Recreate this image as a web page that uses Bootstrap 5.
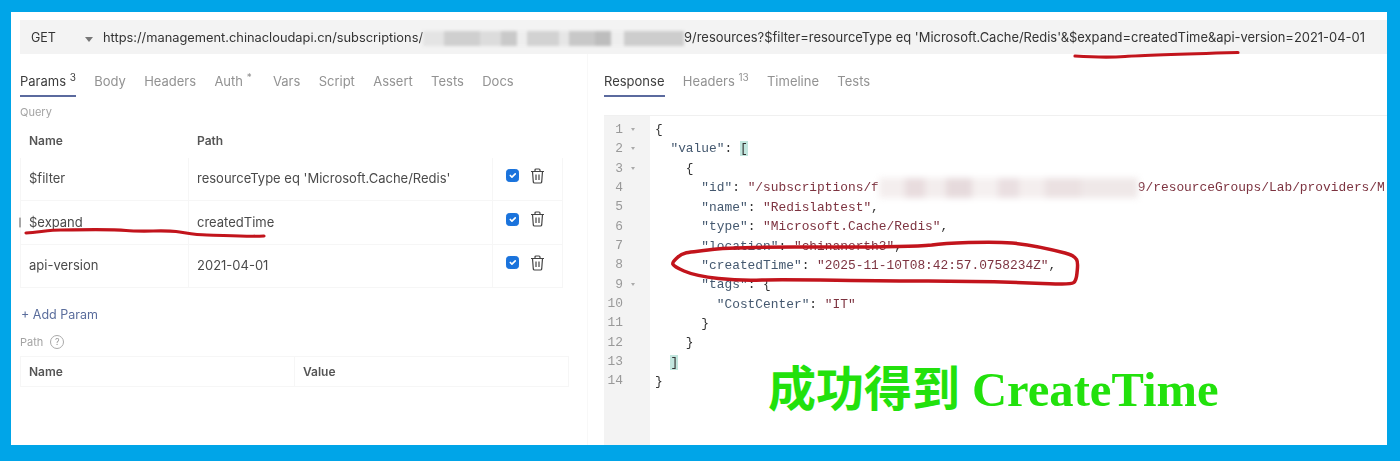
<!DOCTYPE html>
<html lang="en"><head><meta charset="utf-8"><title>API response</title>
<link href="https://cdn.jsdelivr.net/npm/bootstrap@5.3.0/dist/css/bootstrap.min.css" rel="stylesheet">
<style>
html,body{height:461px;overflow:hidden}
body{background:#00a5e8;font-family:Inter,"Liberation Sans",sans-serif;font-size:13px;color:#444;position:relative}
.sheet{margin:12px 13px 0 11px;height:433px;background:#fff;overflow:hidden;filter:blur(.3px)}
.urlbar{margin:8px 0 0 9px;height:34px;background:#f3f3f3;font-size:12.95px;color:#333;white-space:nowrap;padding-top:2px}
.url-head{font-size:12.83px}
.verb{width:59px;padding-left:11px;font-size:12.5px}
.caret-mark{width:0;height:0;border-left:4px solid transparent;border-right:4px solid transparent;border-top:5px solid #777;margin:2px 10px 0 6px}
.smudge{filter:blur(1.5px);height:15px;display:inline-flex;vertical-align:middle}
.smudge i{display:block;height:100%}
.pane-left{width:577px;padding-left:9px;border-right:1px solid #f8f8f8;flex:none}
.pane-right{padding-left:16px;flex:1;min-width:0}
.tabset{gap:18.3px;height:43px;padding-top:12px;font-size:13px;color:#929292;flex-wrap:nowrap}
.tabset .tabitem{height:31px;line-height:30px;white-space:nowrap}
.tabset .on{color:#3c3c3c;border-bottom:2px solid #5b6a9e}
.tabset sup{font-size:10px;top:-.55em}
.authtab{padding-right:3px}
.cap{font-size:11px;color:#a3a3a3}
.query-cap{margin-top:7px}
.grid-tbl{table-layout:fixed;margin:0;--bs-table-border-color:#f6f6f6;--bs-table-color:#4a4a4a}
.grid-tbl th,.grid-tbl td{padding:0 8px;vertical-align:middle;font-size:13px}
.grid-tbl th{font-weight:600;font-size:12px;color:#555}
.params{width:542px;margin-top:4px}
.params thead tr{height:32px;border-color:transparent}
.params thead th{border-color:transparent}
.params tbody tr{height:43.5px}
.params td.row-tools{padding:10px 0 0 13px;vertical-align:top}
.toolset{height:16px;gap:11px}
.tick{width:13px;height:13px;margin:0;border-radius:3px;background-color:#1a73dc!important;border-color:#1a73dc!important;float:none;opacity:1!important;flex:none}
.adder{color:#5a6d9c;font-size:12.5px;margin:18px 0 0 1px;line-height:18px}
.path-cap{margin-top:9px;line-height:18px}
.help-dot{width:14px;height:14px;border:1px solid #aaa;border-radius:50%;font-size:9px;line-height:12px;text-align:center;color:#999;margin-left:7px}
.pathtbl{width:549px;margin-top:5px}
.pathtbl tr{height:30px}
.codebox{border-top:1px solid #f0f0f0;margin-top:18px;height:330px;font-family:"Liberation Mono","DejaVu Sans Mono",monospace;font-size:12.87px;line-height:19.33px;overflow:hidden}
.gutter{width:46px;flex:none;background:#f3f3f3;color:#999;padding-top:4px;height:330px}
.gutter div{display:flex;justify-content:flex-end;align-items:center;padding-right:14px;height:19.33px;position:relative}
.gutter b{display:block;width:11px;padding-left:3px;margin-right:-11px}
.gutter div{padding-right:27px}
.gutter .fold::after{content:"";display:block;border-left:2.5px solid transparent;border-right:2.5px solid transparent;border-top:3.5px solid #aaa;margin-left:5px}
.gutter b{margin-right:-11px}
.codelines{padding:4px 0 0 5px;color:#333;white-space:pre}
.k{color:#44586f}.s{color:#7d3340}
.hl{background:#c2e6de}
.marks{position:absolute;left:0;top:0;pointer-events:none}
.banner{position:absolute;left:768px;top:361px;color:#22e10c;font:700 48px/1.2 "Liberation Serif","Noto Sans CJK SC",serif;white-space:pre}
.banner span{font-size:48.6px}
</style></head>
<body>
<div class="sheet d-flex flex-column">
  <div class="urlbar d-flex align-items-center">
    <span class="verb">GET</span><span class="caret-mark"></span>
    <span><span class="url-head">https://management.chinacloudapi.cn/subscriptions/</span><span class="smudge" style="width:261px"><i style="width:8%;background:#e4e4e4"></i><i style="width:14%;background:#cfcfcf"></i><i style="width:8%;background:#dcdcdc"></i><i style="width:6%;background:#c9c9c9"></i><i style="width:4%;background:#eee"></i><i style="width:12%;background:#d2d2d2"></i><i style="width:4%;background:#e6e6e6"></i><i style="width:10%;background:#c8c8c8"></i><i style="width:6%;background:#bdbdbd"></i><i style="width:5%;background:#eee"></i><i style="width:23%;background:#cdcdcd"></i></span>9/resources?$filter=resourceType eq 'Microsoft.Cache/Redis'&amp;$expand=createdTime&amp;api-version=2021-04-01</span>
  </div>
  <div class="d-flex flex-grow-1">
    <div class="pane-left">
      <div class="nav tabset">
        <span class="tabitem on">Params <sup>3</sup></span><span class="tabitem">Body</span><span class="tabitem">Headers</span><span class="tabitem authtab">Auth <sup>*</sup></span><span class="tabitem">Vars</span><span class="tabitem">Script</span><span class="tabitem">Assert</span><span class="tabitem">Tests</span><span class="tabitem">Docs</span>
      </div>
      <div class="cap query-cap">Query</div>
      <table class="table table-bordered grid-tbl params">
        <colgroup><col style="width:168px"><col style="width:304px"><col style="width:70px"></colgroup>
        <thead><tr><th>Name</th><th>Path</th><th></th></tr></thead>
        <tbody>
          <tr><td>$filter</td><td>resourceType eq 'Microsoft.Cache/Redis'</td><td class="row-tools"><div class="toolset d-flex align-items-center"><input class="form-check-input tick" type="checkbox" checked aria-label="enabled"><svg width="15" height="16" viewBox="0 0 15 16" fill="none" stroke="#444" stroke-width="1.2"><path d="M1 3.5h13M5 3.5V2a1 1 0 0 1 1-1h3a1 1 0 0 1 1 1v1.5M2.5 3.5l.8 10.5a1.3 1.3 0 0 0 1.3 1h5.8a1.3 1.3 0 0 0 1.3-1l.8-10.5M6 6.500v5.500M9 6.500v5.500"/></svg></div></td></tr>
          <tr><td>$expand</td><td>createdTime</td><td class="row-tools"><div class="toolset d-flex align-items-center"><input class="form-check-input tick" type="checkbox" checked aria-label="enabled"><svg width="15" height="16" viewBox="0 0 15 16" fill="none" stroke="#444" stroke-width="1.2"><path d="M1 3.5h13M5 3.5V2a1 1 0 0 1 1-1h3a1 1 0 0 1 1 1v1.5M2.5 3.5l.8 10.5a1.3 1.3 0 0 0 1.3 1h5.8a1.3 1.3 0 0 0 1.3-1l.8-10.5M6 6.500v5.500M9 6.500v5.500"/></svg></div></td></tr>
          <tr><td>api-version</td><td>2021-04-01</td><td class="row-tools"><div class="toolset d-flex align-items-center"><input class="form-check-input tick" type="checkbox" checked aria-label="enabled"><svg width="15" height="16" viewBox="0 0 15 16" fill="none" stroke="#444" stroke-width="1.2"><path d="M1 3.5h13M5 3.5V2a1 1 0 0 1 1-1h3a1 1 0 0 1 1 1v1.5M2.5 3.5l.8 10.5a1.3 1.3 0 0 0 1.3 1h5.8a1.3 1.3 0 0 0 1.3-1l.8-10.5M6 6.500v5.500M9 6.500v5.500"/></svg></div></td></tr>
        </tbody>
      </table>
      <div class="adder">+ Add Param</div>
      <div class="cap path-cap d-flex align-items-center">Path<span class="help-dot">?</span></div>
      <table class="table table-bordered grid-tbl pathtbl">
        <colgroup><col style="width:50%"><col style="width:50%"></colgroup>
        <tr><th>Name</th><th>Value</th></tr>
      </table>
    </div>
    <div class="pane-right">
      <div class="nav tabset">
        <span class="tabitem on">Response</span><span class="tabitem">Headers <sup>13</sup></span><span class="tabitem">Timeline</span><span class="tabitem">Tests</span>
      </div>
      <div class="codebox d-flex">
        <div class="gutter">
          <div>1<b class="fold"></b></div><div>2<b class="fold"></b></div><div>3<b class="fold"></b></div><div>4<b></b></div><div>5<b></b></div><div>6<b></b></div><div>7<b></b></div><div>8<b></b></div><div>9<b class="fold"></b></div><div>10<b></b></div><div>11<b></b></div><div>12<b></b></div><div>13<b></b></div><div>14<b></b></div>
        </div>
        <div class="codelines"><div>{</div><div>  <span class="k">"value"</span>: <span class="hl">[</span></div><div>    {</div><div>      <span class="k">"id"</span>: <span class="s">"/subscriptions/f<span class="smudge" style="width:259px;height:20px;filter:blur(3px)"><i style="width:10%;background:#f4eeee"></i><i style="width:8%;background:#e8dcde"></i><i style="width:8%;background:#f3eded"></i><i style="width:10%;background:#e6dadc"></i><i style="width:10%;background:#f5f0f0"></i><i style="width:8%;background:#eadfe1"></i><i style="width:10%;background:#f4eeee"></i><i style="width:14%;background:#ebe1e2"></i><i style="width:22%;background:#efe8e8"></i></span>9/resourceGroups/Lab/providers/M</span></div><div>      <span class="k">"name"</span>: <span class="s">"Redislabtest"</span>,</div><div>      <span class="k">"type"</span>: <span class="s">"Microsoft.Cache/Redis"</span>,</div><div>      <span class="k">"location"</span>: <span class="s">"chinanorth3"</span>,</div><div>      <span class="k">"createdTime"</span>: <span class="s">"2025-11-10T08:42:57.0758234Z"</span>,</div><div>      <span class="k">"tags"</span>: {</div><div>        <span class="k">"CostCenter"</span>: <span class="s">"IT"</span></div><div>      }</div><div>    }</div><div>  <span class="hl">]</span></div><div>}</div></div>
      </div>
    </div>
  </div>
</div>
<div class="banner">成功得到 <span>CreateTime</span></div>
<svg class="marks" width="1400" height="461" viewBox="0 0 1400 461" fill="none" stroke="#c2141c" stroke-linecap="round" stroke-linejoin="round" aria-hidden="true">
  <path stroke-width="3.2" d="M1075 56C1090 57 1105 58 1125 56.500S1200 53.500 1238 52.500"/>
  <path stroke-width="3.2" d="M26 233C40 232 50 230 61 230S110 229 126 230.500 165 230 176 231.500 195 235 207 235 245 237 264 236"/>
  <path stroke-width="3.5" d="M932 245C945 243 990 241 1012 243S1050 249 1065 253 1078 262 1077 273 1074 284 1062 284 1000 281 928 281 790 279 762 280 700 278 684 271 672 263 678 257 695 252 708 250 760 247 795 247 900 248 932 245"/>
  <path stroke="#555" stroke-width="1" d="M20 218v9"/>
</svg>
</body></html>
